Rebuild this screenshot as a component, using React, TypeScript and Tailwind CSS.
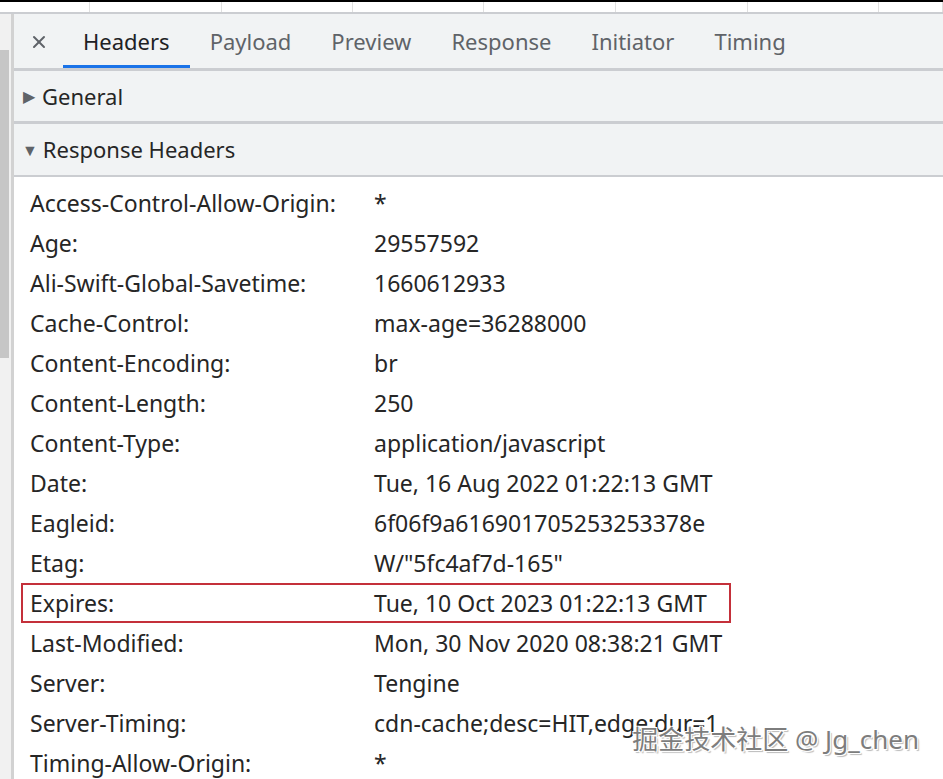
import { X } from 'lucide-react'

// DevTools Network panel — response headers of one request, Expires row boxed.

const tabs = ['Headers', 'Payload', 'Preview', 'Response', 'Initiator', 'Timing']

const headers: [string, string][] = [
  ['Access-Control-Allow-Origin:', '*'],
  ['Age:', '29557592'],
  ['Ali-Swift-Global-Savetime:', '1660612933'],
  ['Cache-Control:', 'max-age=36288000'],
  ['Content-Encoding:', 'br'],
  ['Content-Length:', '250'],
  ['Content-Type:', 'application/javascript'],
  ['Date:', 'Tue, 16 Aug 2022 01:22:13 GMT'],
  ['Eagleid:', '6f06f9a616901705253253378e'],
  ['Etag:', 'W/"5fc4af7d-165"'],
  ['Expires:', 'Tue, 10 Oct 2023 01:22:13 GMT'],
  ['Last-Modified:', 'Mon, 30 Nov 2020 08:38:21 GMT'],
  ['Server:', 'Tengine'],
  ['Server-Timing:', 'cdn-cache;desc=HIT,edge;dur=1'],
  ['Timing-Allow-Origin:', '*'],
]

const stripCols = [90, 132, 131, 131, 132, 132, 131, 64]

export default function App() {
  return (
    <div
      className="relative h-[779px] w-[943px] overflow-hidden bg-white text-[#262626]"
      style={{ fontFamily: '"Noto Sans", "Open Sans", sans-serif' }}
    >
      {/* request list strip peeking in at the top */}
      <div className="flex h-[14px] border-t-2 border-b-2 border-t-black border-b-[#cbcdd1] bg-white">
        {stripCols.map((w, i) => (
          <div key={i} className="h-full shrink-0 border-r border-[#e0e0e0]" style={{ width: w }} />
        ))}
      </div>

      <div className="flex h-[765px]">
        {/* left gutter with scrollbar */}
        <div className="flex w-[11px] shrink-0 flex-col bg-[#f1f1f1]">
          <div className="h-[36px]" />
          <div className="h-[308px] w-[9px] bg-[#c6c6c6]" />
        </div>
        <div className="w-[3px] shrink-0 bg-[#d2d2d2]" />

        <div className="flex min-w-0 flex-1 flex-col">
          {/* tab bar */}
          <div className="flex h-[57px] shrink-0 items-stretch border-b-[3px] border-[#cbcdd1] bg-[#f1f3f4]">
            <div className="flex w-[49px] items-center justify-center pt-[2px]">
              <X size={20} strokeWidth={2.4} className="text-[#5f6368]" />
            </div>
            {tabs.map((t, i) => (
              <div
                key={t}
                className={
                  i === 0
                    ? 'flex items-center border-b-[3px] border-[#1a73e8] px-5 pt-[3px] text-[22px] text-[#202124]'
                    : 'flex items-center px-5 text-[22px] text-[#5f6368]'
                }
              >
                {t}
              </div>
            ))}
          </div>

          {/* General */}
          <div className="flex h-[53px] shrink-0 items-center gap-[7px] border-b-[3px] border-[#cbcdd1] bg-[#f1f3f4] pl-[9px] text-[22px]">
            <span className="text-[16px] text-[#5f6368]">▶</span>
            <span>General</span>
          </div>

          {/* Response Headers */}
          <div className="flex h-[53px] shrink-0 items-center gap-[5px] border-b-2 border-[#cbcdd1] bg-[#f1f3f4] pl-[8px] text-[22px]">
            <span className="text-[16px] text-[#5f6368]">▼</span>
            <span>Response Headers</span>
          </div>

          <div className="flex flex-col px-[7px] pt-[6px]">
            {headers.map(([k, v]) => (
              <div
                key={k}
                className={
                  k === 'Expires:'
                    ? 'flex h-[40px] w-[710px] shrink-0 items-center border-2 border-[#c4303a] pl-[7px] text-[23px]'
                    : 'flex h-[40px] shrink-0 items-center border-2 border-transparent pl-[7px] text-[23px]'
                }
              >
                <span className="w-[344px] shrink-0 whitespace-nowrap">{k}</span>
                <span className="whitespace-nowrap">{v}</span>
              </div>
            ))}
          </div>
        </div>
      </div>

      {/* watermark */}
      <div
        className="absolute right-[24px] bottom-[20px] text-[26px] text-[#7d7d7d]"
        style={{
          fontFamily: '"Noto Sans", "Noto Sans CJK SC", sans-serif',
          textShadow: '1px 1px 0 #fff, -1px -1px 0 #fff, 1px -1px 0 #fff, -1px 1px 0 #fff, 2px 2px 1px #bbb',
        }}
      >
        掘金技术社区 @ Jg_chen
      </div>
    </div>
  )
}
